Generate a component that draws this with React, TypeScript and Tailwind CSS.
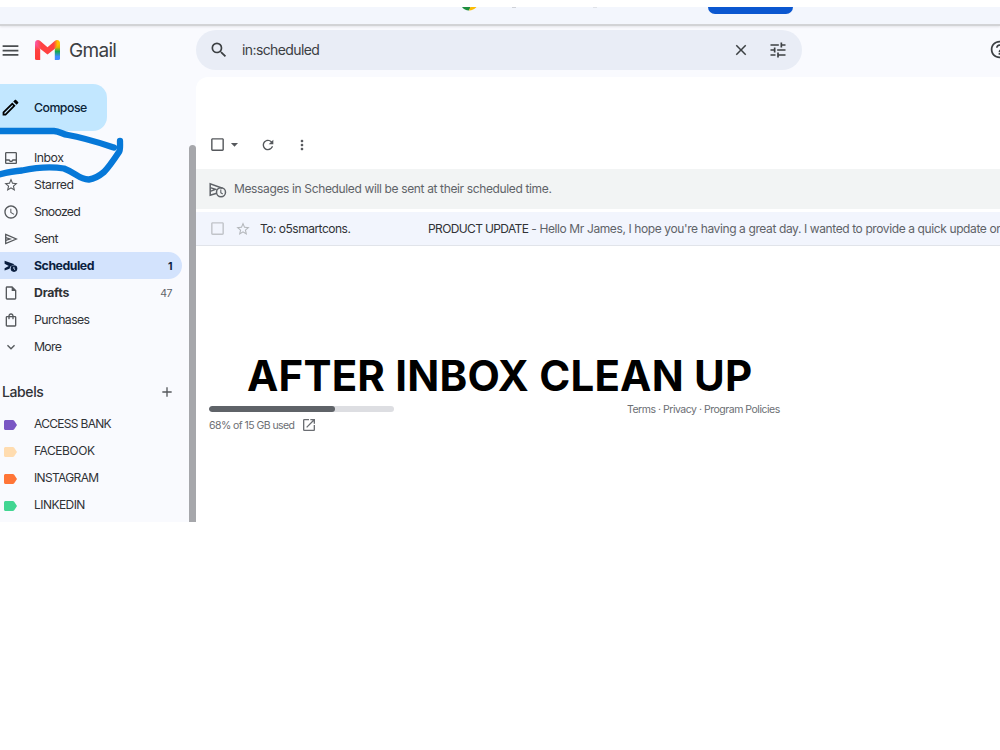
import type { ReactNode } from "react";
import {
  MdAccessTime,
  MdAdd,
  MdArrowDropDown,
  MdCheckBoxOutlineBlank,
  MdClose,
  MdExpandMore,
  MdHelpOutline,
  MdMenu,
  MdMoreVert,
  MdOpenInNew,
  MdOutlineEdit,
  MdOutlineInbox,
  MdOutlineInsertDriveFile,
  MdOutlineShoppingBag,
  MdRefresh,
  MdSearch,
  MdStarBorder,
  MdTune,
} from "react-icons/md";

type NavItem = {
  label: string;
  icon: ReactNode;
  tracking: string;
  count?: string;
  active?: boolean;
  bold?: boolean;
};

function SendIcon() {
  return (
    <svg viewBox="0 0 16 16" className="size-4" fill="none" stroke="currentColor" strokeWidth="1.3">
      <path d="M2.700 3.400L13.300 8L2.700 12.600z" strokeLinejoin="miter" />
      <path d="M2.700 6.600L7 8L2.700 9.400" />
    </svg>
  );
}

function ScheduledIcon() {
  return (
    <svg viewBox="0 0 16 16" className="size-4">
      <path d="M1.600 2.800L11.500 6.300L7.300 8.600L6.500 10.800L1.600 12.500V10.200L5.800 7.900L1.600 5.800z" fill="currentColor" />
      <circle cx="11" cy="10.600" r="3.300" fill="currentColor" />
      <path d="M10.900 8.900V10.800L12.100 11.600" fill="none" stroke="#d3e3fd" strokeWidth="1" />
    </svg>
  );
}

function ScheduledOutlineIcon() {
  return (
    <svg viewBox="0 0 18 16" className="h-4 w-[18px]" fill="none" stroke="currentColor" strokeWidth="1.5">
      <path d="M7 11.500L1.200 13.300V1.800L13.500 6.200" />
      <path d="M1.200 5.600L6.500 7.400L1.200 9.400" />
      <circle cx="12" cy="10.300" r="4.500" />
      <path d="M11.800 7.600V10.600L13.700 12" strokeWidth="1.1" />
    </svg>
  );
}

function LabelIcon({ className }: { className: string }) {
  return (
    <svg viewBox="0 0 13 10" className={`h-[10px] w-[13px] ${className}`} fill="currentColor">
      <path d="M1.500 0H8.800C9.400 0 9.900.2 10.200.7L13 5L10.200 9.300C9.900 9.800 9.400 10 8.800 10H1.500C.7 10 0 9.300 0 8.500V1.500C0 .7.7 0 1.500 0z" />
    </svg>
  );
}

const navItems: NavItem[] = [
  { label: "Inbox", icon: <MdOutlineInbox />, tracking: "tracking-[-0.5px]" },
  { label: "Starred", icon: <MdStarBorder />, tracking: "tracking-[-0.45px]" },
  { label: "Snoozed", icon: <MdAccessTime />, tracking: "tracking-[-0.7px]" },
  { label: "Sent", icon: <SendIcon />, tracking: "tracking-[-0.6px]" },
  { label: "Scheduled", icon: <ScheduledIcon />, tracking: "tracking-[-0.45px]", count: "1", active: true, bold: true },
  { label: "Drafts", icon: <MdOutlineInsertDriveFile />, tracking: "tracking-[-0.25px]", count: "47", bold: true },
  { label: "Purchases", icon: <MdOutlineShoppingBag />, tracking: "tracking-[-0.6px]" },
  { label: "More", icon: <MdExpandMore />, tracking: "tracking-[-0.75px]" },
];

const labels = [
  { name: "ACCESS BANK", color: "text-[#7a56c4]", tracking: "tracking-[-0.7px]" },
  { name: "FACEBOOK", color: "text-[#ffdcb0]", tracking: "tracking-[-0.45px]" },
  { name: "INSTAGRAM", color: "text-[#ff7537]", tracking: "tracking-[-0.65px]" },
  { name: "LINKEDIN", color: "text-[#42d692]", tracking: "tracking-[-0.55px]" },
];

function GmailLogo() {
  return (
    <svg viewBox="0 0 25 20" className="h-5 w-[25px]">
      <defs>
        <linearGradient id="left" x1="0" y1="0" x2="0" y2="1">
          <stop offset="0" stopColor="#fb5bb0" />
          <stop offset="0.4" stopColor="#ff4141" />
          <stop offset="1" stopColor="#ff3b37" />
        </linearGradient>
        <linearGradient id="right" x1="0" y1="0" x2="0" y2="1">
          <stop offset="0" stopColor="#ffc400" />
          <stop offset="0.25" stopColor="#e5b400" />
          <stop offset="0.5" stopColor="#12a954" />
          <stop offset="0.8" stopColor="#3f8cff" />
        </linearGradient>
        <linearGradient id="middle" x1="0" y1="0" x2="1" y2="0">
          <stop offset="0" stopColor="#fb5bb0" />
          <stop offset="0.25" stopColor="#ff4141" />
          <stop offset="0.75" stopColor="#ff4141" />
          <stop offset="0.9" stopColor="#ffbf00" />
        </linearGradient>
      </defs>
      <path
        d="M0 3C0 .4 3 -.9 5 .8L12.500 7.200L20 .8C22 -.9 25 .4 25 3C25 4.200 24.500 5 23.700 5.700L12.500 14.500L1.300 5.700C.5 5 0 4.200 0 3z"
        fill="url(#middle)"
      />
      <path d="M0 3L5.200 8.800V20H1.600A1.600 1.600 0 0 1 0 18.400z" fill="url(#left)" />
      <path d="M19.800 8.800L25 3V18.400A1.600 1.600 0 0 1 23.400 20H19.800z" fill="url(#right)" />
    </svg>
  );
}

function BrowserStrip() {
  return (
    <div className="flex h-[19px] shrink-0 items-start overflow-hidden border-b-2 border-[#d2d3d6] bg-[#f3f6fd] shadow-[0_1px_2px_#e3e4e8]">
      <svg viewBox="0 0 16 4" className="ml-[461px] h-1 w-4">
        <path d="M1 0h8.500L8 3.500C5 3.500 2.500 2.200 1 0z" fill="#1e8e3e" />
        <path d="M9.500 0H15.500C13.500 2.300 11 3.500 8 3.500z" fill="#fbbc04" />
      </svg>
      <div className="ml-[35px] h-px w-1 bg-[#cfd2d8]" />
      <div className="ml-[77px] h-px w-1 bg-[#dfe2e8]" />
      <div className="ml-[111px] h-[7px] w-[85px] rounded-b-[12px] bg-[#0b57d0]" />
    </div>
  );
}

function Header() {
  return (
    <header className="flex h-[51px] shrink-0">
      <div className="flex h-[49px] w-[196px] shrink-0 items-center">
        <MdMenu className="size-[21px] text-[#4a4d50]" />
        <div className="-mt-px ml-[14px]">
          <GmailLogo />
        </div>
        <span className="mt-[2px] ml-[9px] text-[19px] tracking-[-0.7px] text-[#3c4043]">Gmail</span>
      </div>
      <div className="mt-[4px] flex h-10 w-[606px] shrink-0 items-center rounded-full bg-[#e9edf6] text-[#3c4043]">
        <MdSearch className="ml-[13px] size-5" />
        <span className="-mt-px ml-[13px] w-[490px] text-[14px] tracking-[-0.6px]">in:scheduled</span>
        <MdClose className="size-[18px]" />
        <MdTune className="ml-[18px] size-[20px]" />
      </div>
      <MdHelpOutline className="mt-[13px] ml-[187px] size-[21px] shrink-0 text-[#3c4043]" />
    </header>
  );
}

function Sidebar() {
  return (
    <aside className="flex w-[196px] shrink-0 justify-between text-[12.3px] text-[#303236]">
      <div className="w-[182px]">
        <button className="mt-[7px] flex h-[47px] w-[107px] items-center rounded-r-[14px] bg-[#c2e7ff] text-[#0b2438]">
          <MdOutlineEdit className="size-[21px] text-black" />
          <span className="mt-px ml-[13px] font-medium tracking-[-0.5px]">Compose</span>
        </button>

        <nav className="mt-[13px]">
          {navItems.map((item) => (
            <a
              key={item.label}
              className={`flex h-[27px] items-center rounded-r-full pl-[3px] ${
                item.active ? "bg-[#d3e3fd] text-[#0b1f3f]" : ""
              }`}
            >
              <span className={`mt-px text-[16px] ${item.active ? "text-[#0b1f3f]" : "text-[#55585c]"}`}>
                {item.icon}
              </span>
              <span className={`mt-[2px] ml-[15px] ${item.tracking} ${item.bold ? "font-bold" : ""}`}>
                {item.label}
              </span>
              {item.count && (
                <span
                  className={`mt-[2px] mr-[10px] ml-auto text-[10.5px] tracking-[-0.5px] ${
                    item.active ? "font-bold" : "text-[#5f6368]"
                  }`}
                >
                  {item.count}
                </span>
              )}
            </a>
          ))}
        </nav>

        <div className="mt-[12px] flex h-10 items-center justify-between pr-[7px] pl-[2px]">
          <h3 className="-mt-px text-[14px] font-medium tracking-[-0.4px]">Labels</h3>
          <MdAdd className="size-4 text-[#55585c]" />
        </div>

        {labels.map((label) => (
          <a key={label.name} className="-mt-px mb-px flex h-[27px] items-center pl-[4px]">
            <LabelIcon className={label.color} />
            <span className={`-mt-px ml-[17px] text-[12px] ${label.tracking}`}>{label.name}</span>
          </a>
        ))}
      </div>

      {/* scrollbar */}
      <div className="mt-[68px] w-[7px] rounded-t-[4px] bg-[#a6a7ab]" />
    </aside>
  );
}

function MailList() {
  return (
    <main className="min-w-0 grow overflow-hidden rounded-tl-[12px] bg-white">
      <div className="flex h-[92px] items-end pb-[16px] pl-[13px] text-[#55585c]">
        <MdCheckBoxOutlineBlank className="size-[17px]" />
        <MdArrowDropDown className="size-[17px]" />
        <MdRefresh className="ml-[17px] size-4" />
        <MdMoreVert className="ml-[18px] size-4" />
      </div>

      <div className="flex h-[40px] items-center bg-[#f2f4f4] pl-[13px] text-[12px] text-[#5f6368]">
        <span className="mt-px">
          <ScheduledOutlineIcon />
        </span>
        <span className="ml-[7px] tracking-[-0.36px]">Messages in Scheduled will be sent at their scheduled time.</span>
      </div>

      <div className="mt-[3px] flex h-[34px] items-center border-b border-[#e1e4ea] bg-[#f2f5fd] pl-[13px] text-[12px] whitespace-nowrap">
        <MdCheckBoxOutlineBlank className="size-[17px] shrink-0 text-[#c1c4c9]" />
        <MdStarBorder className="mt-px ml-[9px] size-4 shrink-0 text-[#b5b8bc]" />
        <span className="ml-[9px] w-[168px] shrink-0 tracking-[-0.5px] text-[#303236]">To: o5smartcons.</span>
        <span className="tracking-[-0.63px] text-[#303236]">PRODUCT UPDATE</span>
        <span className="ml-[3px] tracking-[-0.39px] text-[#5f6368]">
          - Hello Mr James, I hope you're having a great day. I wanted to provide a quick update on
        </span>
      </div>

      <h1 className="mt-[109px] ml-[51px] text-[42px] leading-[42px] font-[650] tracking-[0.2px] whitespace-nowrap text-black">
        AFTER INBOX CLEAN UP
      </h1>

      <footer className="mt-[5px] flex items-start pl-[13px] text-[10.5px] leading-4 text-[#6b6e73]">
        <div className="mt-[4px] w-[418px]">
          <div className="h-[6px] w-[185px] overflow-hidden rounded-full bg-[#dddee2]">
            <div className="h-full w-[126px] rounded-full bg-[#5f6368]" />
          </div>
          <div className="mt-[4px] flex items-center">
            <span className="mt-[2px] tracking-[-0.56px]">68% of 15 GB used</span>
            <MdOpenInNew className="ml-[7px] size-[16px]" />
          </div>
        </div>
        <span className="tracking-[-0.48px]">Terms · Privacy · Program Policies</span>
      </footer>
    </main>
  );
}

export default function App() {
  return (
    <div className="relative h-[750px] w-[1000px] overflow-hidden bg-white pt-[7px] font-['Inter',sans-serif]">
      <div className="flex h-[515px] flex-col overflow-hidden bg-[#f9fafe]">
        <BrowserStrip />
        <Header />
        <div className="flex min-h-0 grow">
          <Sidebar />
          <MailList />
        </div>
      </div>

      {/* marker stroke around the inbox row */}
      <svg
        viewBox="0 0 130 60"
        className="pointer-events-none absolute top-[125px] left-0 h-[60px] w-[130px]"
        fill="none"
        stroke="#0678d8"
        strokeWidth="6.3"
        strokeLinecap="round"
        strokeLinejoin="round"
      >
        <path d="M-4 6H54C60 6.500 62 9 68 10C85 13 100 18 114 22.500" />
        <path d="M120 16C120 21 120.500 25 119 27C115 33 109 42 104 47C98 52 93 54 89 54.500C80 55 76 48 64 43.500C52 41.500 36 42.500 22 45.500C12 46 8 47 -3 50" />
      </svg>
    </div>
  );
}
